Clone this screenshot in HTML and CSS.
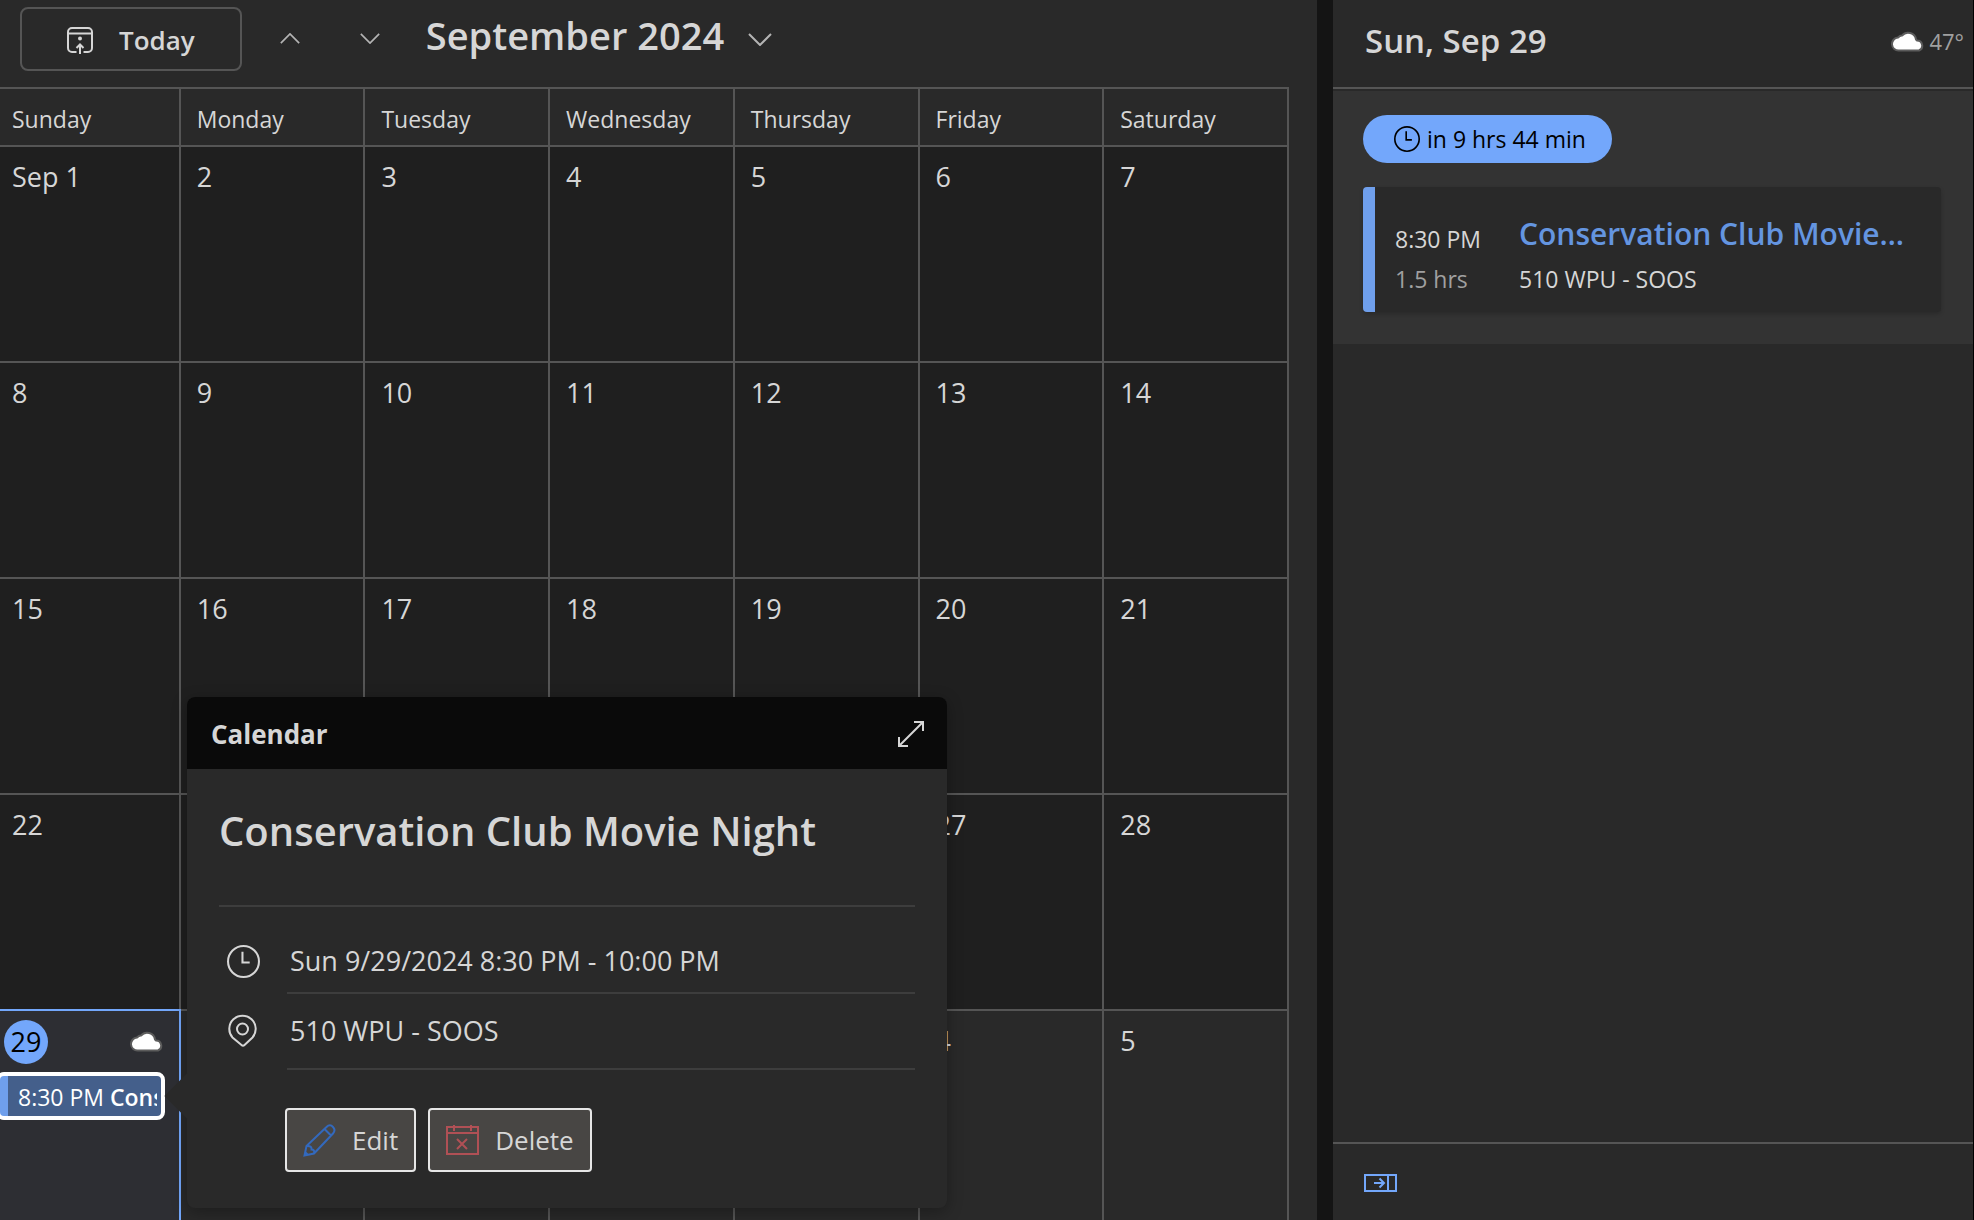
FILE: index.html
```html
<!DOCTYPE html>
<html lang="en">
<head>
    <meta charset="UTF-8">
    <meta name="viewport" content="width=device-width, initial-scale=1.0">
    <title>Calendar</title>
    <link rel="stylesheet" href="styles.css">
</head>
<body>
    <svg width="0" height="0" class="symbols" aria-hidden="true">
        <symbol id="cloud" viewBox="0 0 34 22">
            <path d="M8 20.500A6.500 6.500 0 0 1 7 7.500Q9 5.500 11 5.600A8 8 0 0 1 25 9.500L26 10.500A5.200 5.200 0 0 1 28 20.500Z" fill="#fff" stroke="#5c5c5c" stroke-width="2"/>
        </symbol>
        <symbol id="clock" viewBox="0 0 32 32">
            <circle cx="16" cy="16" r="15" fill="none" stroke="currentColor" stroke-width="2"/>
            <path d="M15 6.500V17h7" fill="none" stroke="currentColor" stroke-width="2"/>
        </symbol>
        <symbol id="chevron" viewBox="0 0 24 13">
            <path d="M1 1L12 12L23 1" fill="none" stroke="currentColor" stroke-width="2"/>
        </symbol>
    </svg>

    <div class="app">
        <main class="month">
            <div class="toolbar">
                <button class="today-btn">
                    <svg width="26" height="27" viewBox="0 0 26 27" fill="none" stroke="currentColor" stroke-width="2">
                        <path d="M9.500 25H5a4 4 0 0 1-4-4V5a4 4 0 0 1 4-4h16a4 4 0 0 1 4 4v16a4 4 0 0 1-4 4h-4.500M1 6.500h24M13 27V18M9.500 21L13 17.500L16.500 21"/>
                        <circle cx="13" cy="11.500" r="2" fill="currentColor" stroke="none"/>
                    </svg>
                    Today
                </button>
                <button class="nav-btn prev" aria-label="Previous month"><svg width="20" height="11"><use href="#chevron"/></svg></button>
                <button class="nav-btn" aria-label="Next month"><svg width="20" height="11"><use href="#chevron"/></svg></button>
                <button class="month-btn">September 2024 <svg width="24" height="13"><use href="#chevron"/></svg></button>
            </div>

            <table class="calendar">
                <thead>
                    <tr><th>Sunday</th><th>Monday</th><th>Tuesday</th><th>Wednesday</th><th>Thursday</th><th>Friday</th><th>Saturday</th></tr>
                </thead>
                <tbody>
                    <tr><td>Sep 1</td><td>2</td><td>3</td><td>4</td><td>5</td><td>6</td><td>7</td></tr>
                    <tr><td>8</td><td>9</td><td>10</td><td>11</td><td>12</td><td>13</td><td>14</td></tr>
                    <tr><td>15</td><td>16</td><td>17</td><td>18</td><td>19</td><td>20</td><td>21</td></tr>
                    <tr><td>22</td><td>23</td><td>24</td><td>25</td><td>26</td><td>27</td><td>28</td></tr>
                    <tr class="current">
                        <td class="today">
                            <div class="today-head">
                                <span class="badge">29</span>
                                <svg width="34" height="22"><use href="#cloud"/></svg>
                            </div>
                            <a class="event" href="#details"><span>8:30 PM <b>Conservation Club Movie Night</b></span></a>
                        </td>
                        <td>30</td><td>Oct 1</td><td>2</td><td>3</td><td>4</td><td>5</td>
                    </tr>
                </tbody>
            </table>

            <section class="popup" id="details">
                <header class="popup-header">
                    <h2>Calendar</h2>
                    <button class="icon-btn" aria-label="Expand">
                        <svg width="28" height="28" viewBox="0 0 28 28" fill="none" stroke="currentColor" stroke-width="2">
                            <path d="M2 26L26 2M17 2h9v9M2 17v9h9"/>
                        </svg>
                    </button>
                </header>
                <div class="popup-body">
                    <h1>Conservation Club Movie Night</h1>
                    <div class="detail">
                        <svg width="33" height="33"><use href="#clock"/></svg>
                        <p>Sun 9/29/2024 8:30 PM - 10:00 PM</p>
                    </div>
                    <div class="detail place">
                        <svg width="33" height="33" viewBox="0 0 33 33" fill="none" stroke="currentColor" stroke-width="2">
                            <path d="M14.500 31L5.500 23.500A13.200 13.200 0 1 1 25.500 23.500L17.500 31Q16 32.500 14.500 31Z"/>
                            <circle cx="15.500" cy="15" r="5.500"/>
                        </svg>
                        <p>510 WPU - SOOS</p>
                    </div>
                    <div class="actions">
                        <button>
                            <svg width="33" height="33" viewBox="0 0 33 33" fill="none" stroke="#3369bd" stroke-width="2">
                                <path d="M1.500 31.500L3.500 22L23.500 3Q27 -0.500 30 3Q33 6 30 9.500L11 29.500ZM21.500 5L28 11.500M3.500 22Q9 21.500 8.500 25.500Q12 25.500 11 29.500M2 28L5 31"/>
                            </svg>
                            Edit
                        </button>
                        <button>
                            <svg width="33" height="33" viewBox="0 0 33 33" fill="none" stroke="#b05055" stroke-width="2">
                                <path d="M1 3h31v27H1ZM1 9h31M8 1v6M25 1v6M11 15l10 10M21 15L11 25"/>
                            </svg>
                            Delete
                        </button>
                    </div>
                </div>
            </section>
        </main>

        <aside class="agenda">
            <header class="agenda-header">
                <h2>Sun, Sep 29</h2>
                <div class="weather"><svg width="34" height="22"><use href="#cloud"/></svg>47°</div>
            </header>
            <section class="upcoming">
                <div class="pill"><svg width="26" height="26"><use href="#clock"/></svg>in 9 hrs 44 min</div>
                <article class="card">
                    <div class="when">
                        <div class="time">8:30 PM</div>
                        <div class="length">1.5 hrs</div>
                    </div>
                    <div class="what">
                        <h3>Conservation Club Movie Night</h3>
                        <div>510 WPU - SOOS</div>
                    </div>
                </article>
            </section>
            <footer class="agenda-footer">
                <button class="icon-btn" aria-label="Hide agenda">
                    <svg width="33" height="18" viewBox="0 0 33 18" fill="none" stroke="currentColor" stroke-width="2">
                        <path d="M1 1h31v16H1ZM24 1v16M10 9h10M15.500 4.500L20 9L15.500 13.500"/>
                    </svg>
                </button>
            </footer>
        </aside>
    </div>
</body>
</html>
```
FILE: styles.css
```css
* {
    margin: 0;
    padding: 0;
    box-sizing: border-box;
}

body {
    font-family: 'Open Sans', 'Noto Sans', sans-serif;
    font-size: 23px;
    line-height: 32px;
    color: #d6d6d6;
    background: #292929;
    overflow: hidden;
}

button {
    font: inherit;
    color: inherit;
    background: none;
    border: none;
    cursor: pointer;
}

svg {
    display: block;
    flex-shrink: 0;
}

.symbols {
    position: absolute;
}

.app {
    display: flex;
    height: 100vh;
}

/* month view */
.month {
    flex: 1;
    position: relative;
    overflow: hidden;
}

.toolbar {
    display: flex;
    align-items: flex-start;
    height: 87px;
    padding: 7px 20px 0;
}

.today-btn {
    display: flex;
    align-items: center;
    gap: 26px;
    height: 64px;
    padding: 2px 45px 0;
    border: 2px solid #555;
    border-radius: 8px;
    font-size: 26px;
    font-weight: 600;
}

.nav-btn {
    display: flex;
    justify-content: center;
    align-items: center;
    width: 80px;
    height: 62px;
    color: #b4b4b4;
}

.nav-btn.prev {
    margin-left: 8px;
}

.prev svg {
    transform: rotate(180deg);
}

.month-btn {
    display: flex;
    align-items: center;
    gap: 24px;
    height: 56px;
    margin-left: 16px;
    font-size: 38px;
    font-weight: 600;
}

.month-btn svg {
    margin-top: 8px;
    color: #b4b4b4;
}

.calendar {
    table-layout: fixed;
    width: calc(100% - 24px);
    margin-left: -4px;
    border-spacing: 0;
}

.calendar th,
.calendar td {
    border-top: 2px solid #555;
    border-right: 2px solid #555;
    padding: 14px 14px 0 16px;
    text-align: left;
    vertical-align: top;
}

.calendar th {
    height: 58px;
    font-weight: 400;
}

.calendar td {
    height: 216px;
    font-size: 27px;
    background: #1f1f1f;
}

.calendar .current td {
    background: #292929;
}

.calendar .current .today {
    padding: 9px 14px 0 0;
    border-color: #73a7fb;
    background: #2d2e33;
}

.today-head {
    display: flex;
    justify-content: space-between;
    align-items: center;
    padding: 0 1px 0 8px;
}

.today-head svg {
    margin-bottom: 2px;
}

.badge {
    width: 44px;
    height: 44px;
    border-radius: 50%;
    background: #73a7fb;
    color: #000;
    font-weight: 500;
    line-height: 44px;
    text-align: center;
}

.event {
    display: block;
    height: 48px;
    margin-top: 8px;
    padding: 0 4px 0 18px;
    border: 4px solid #fff;
    border-radius: 8px;
    background: linear-gradient(to right, #6f9fec 8px, #445f8b 8px);
    color: #fff;
    font-size: 23px;
    line-height: 42px;
    text-decoration: none;
}

.event span {
    display: block;
    overflow: hidden;
    white-space: nowrap;
}

.event b {
    font-weight: 600;
}

/* event details */
.popup {
    position: absolute;
    left: 187px;
    top: 697px;
    width: 760px;
    border-radius: 8px;
    background: #292929;
    box-shadow: 0 4px 16px rgba(0, 0, 0, 0.3);
}

.popup::before {
    content: '';
    position: absolute;
    left: -16px;
    bottom: 96px;
    width: 32px;
    height: 32px;
    background: #292929;
    transform: rotate(45deg);
}

.popup-header {
    position: relative;
    display: flex;
    justify-content: space-between;
    align-items: center;
    height: 72px;
    padding: 2px 22px 0 24px;
    border-radius: 8px 8px 0 0;
    background: #0a0a0a;
}

.popup-header h2 {
    font-size: 26px;
    font-weight: 700;
}

.popup-body {
    position: relative;
    padding: 32px 32px 36px;
}

.popup-body h1 {
    height: 106px;
    border-bottom: 2px solid #3d3d3d;
    font-size: 40px;
    font-weight: 600;
    line-height: 60px;
}

.detail {
    display: flex;
    align-items: center;
    gap: 27px;
    padding-left: 8px;
    font-size: 27px;
}

.detail p {
    flex: 1;
    height: 66px;
    padding: 0 3px;
    border-bottom: 2px solid #3d3d3d;
    line-height: 66px;
}

.detail:nth-child(2) {
    margin-top: 21px;
}

.place p {
    height: 76px;
    line-height: 74px;
}

.place svg {
    margin-bottom: 3px;
}

.actions {
    display: flex;
    gap: 12px;
    padding: 38px 0 0 66px;
}

.actions button {
    display: flex;
    align-items: center;
    gap: 16px;
    height: 64px;
    padding: 0 16px;
    border: 2px solid #e6e6e6;
    border-radius: 4px;
    background: #484644;
    font-size: 26px;
    line-height: 36px;
}

/* agenda */
.agenda {
    display: flex;
    flex-direction: column;
    width: 657px;
    border-left: 16px solid #141414;
    border-right: 1px solid #000;
}

.agenda-header {
    display: flex;
    justify-content: space-between;
    align-items: center;
    height: 89px;
    padding: 0 9px 6px 32px;
    border-bottom: 2px solid #555;
}

.agenda-header h2 {
    font-size: 33px;
    font-weight: 600;
}

.weather {
    display: flex;
    align-items: center;
    gap: 4px;
    color: #a0a0a0;
    font-size: 22px;
}

.upcoming {
    margin-top: 2px;
    padding: 24px 32px 32px 30px;
    background: #333;
}

.pill {
    display: flex;
    align-items: center;
    gap: 7px;
    width: fit-content;
    height: 48px;
    padding: 0 26px 0 31px;
    border-radius: 24px;
    background: #73a7fb;
    color: #000;
}

.card {
    display: flex;
    height: 125px;
    margin-top: 24px;
    padding: 24px 30px 0 20px;
    border-left: 12px solid #6f9fec;
    border-radius: 4px;
    background: #292929;
    box-shadow: 0 2px 4px rgba(0, 0, 0, 0.2);
}

.when {
    width: 124px;
}

.time {
    margin-top: 12px;
}

.length {
    margin-top: 8px;
    color: #a0a0a0;
}

.what {
    flex: 1;
    min-width: 0;
}

.what h3 {
    overflow: hidden;
    margin-bottom: 6px;
    color: #6495e0;
    font-size: 30px;
    font-weight: 600;
    line-height: 46px;
    text-overflow: ellipsis;
    white-space: nowrap;
}

.agenda-footer {
    height: 78px;
    margin-top: auto;
    padding: 30px 31px 0;
    border-top: 2px solid #555;
    color: #73a7fb;
}

.icon-btn {
    display: flex;
}
```
